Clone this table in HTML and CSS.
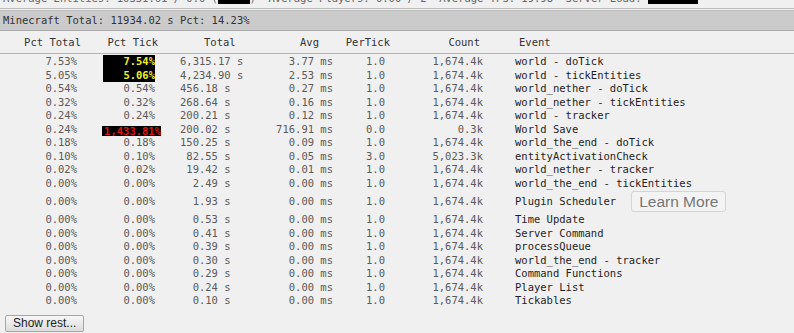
FILE: index.html
```html
<!DOCTYPE html>
<html>
<head>
<meta charset="utf-8">
<title>Timings</title>
<link rel="stylesheet" href="styles.css">
</head>
<body>
<div class="strip"><div class="strip-line">Average Entities: 10331.61 / 0.0 (<span class="blk">     </span>)  Average Players: 0.00 / 2  Average TPS: 19.98  Server Load: <span class="blk">        </span></div></div>
<div class="rule"></div>
<div class="summary">Minecraft Total: 11934.02 s Pct: 14.23%</div>
<table class="timings">
<colgroup>
<col class="w1"><col class="w2"><col class="w3"><col class="w4"><col class="w5"><col class="w6"><col class="w7">
</colgroup>
<thead>
<tr>
<th class="h-pct">Pct Total</th>
<th class="h-tick">Pct Tick</th>
<th class="h-total">Total</th>
<th class="h-avg">Avg</th>
<th class="h-per">PerTick</th>
<th class="h-count">Count</th>
<th class="h-event">Event</th>
</tr>
</thead>
<tbody>
<tr class="first"><td class="c-pct">7.53%</td><td class="c-tick"><span class="hot">7.54%</span></td><td class="c-total">6,315.17 s</td><td class="c-avg">3.77 ms</td><td class="c-per">1.0</td><td class="c-count">1,674.4k</td><td class="c-event">world - doTick</td></tr>
<tr><td class="c-pct">5.05%</td><td class="c-tick"><span class="hot">5.06%</span></td><td class="c-total">4,234.90 s</td><td class="c-avg">2.53 ms</td><td class="c-per">1.0</td><td class="c-count">1,674.4k</td><td class="c-event">world - tickEntities</td></tr>
<tr><td class="c-pct">0.54%</td><td class="c-tick">0.54%</td><td class="c-total">456.18 s</td><td class="c-avg">0.27 ms</td><td class="c-per">1.0</td><td class="c-count">1,674.4k</td><td class="c-event">world_nether - doTick</td></tr>
<tr><td class="c-pct">0.32%</td><td class="c-tick">0.32%</td><td class="c-total">268.64 s</td><td class="c-avg">0.16 ms</td><td class="c-per">1.0</td><td class="c-count">1,674.4k</td><td class="c-event">world_nether - tickEntities</td></tr>
<tr><td class="c-pct">0.24%</td><td class="c-tick">0.24%</td><td class="c-total">200.21 s</td><td class="c-avg">0.12 ms</td><td class="c-per">1.0</td><td class="c-count">1,674.4k</td><td class="c-event">world - tracker</td></tr>
<tr><td class="c-pct">0.24%</td><td class="c-tick"><span class="lag">1,433.81%</span></td><td class="c-total">200.02 s</td><td class="c-avg">716.91 ms</td><td class="c-per">0.0</td><td class="c-count">0.3k</td><td class="c-event">World Save</td></tr>
<tr><td class="c-pct">0.18%</td><td class="c-tick">0.18%</td><td class="c-total">150.25 s</td><td class="c-avg">0.09 ms</td><td class="c-per">1.0</td><td class="c-count">1,674.4k</td><td class="c-event">world_the_end - doTick</td></tr>
<tr><td class="c-pct">0.10%</td><td class="c-tick">0.10%</td><td class="c-total"> 82.55 s</td><td class="c-avg">0.05 ms</td><td class="c-per">3.0</td><td class="c-count">5,023.3k</td><td class="c-event">entityActivationCheck</td></tr>
<tr><td class="c-pct">0.02%</td><td class="c-tick">0.02%</td><td class="c-total"> 19.42 s</td><td class="c-avg">0.01 ms</td><td class="c-per">1.0</td><td class="c-count">1,674.4k</td><td class="c-event">world_nether - tracker</td></tr>
<tr><td class="c-pct">0.00%</td><td class="c-tick">0.00%</td><td class="c-total">  2.49 s</td><td class="c-avg">0.00 ms</td><td class="c-per">1.0</td><td class="c-count">1,674.4k</td><td class="c-event">world_the_end - tickEntities</td></tr>
<tr class="tall"><td class="c-pct">0.00%</td><td class="c-tick">0.00%</td><td class="c-total">  1.93 s</td><td class="c-avg">0.00 ms</td><td class="c-per">1.0</td><td class="c-count">1,674.4k</td><td class="c-event">Plugin Scheduler<button class="learn" type="button">Learn More</button></td></tr>
<tr><td class="c-pct">0.00%</td><td class="c-tick">0.00%</td><td class="c-total">  0.53 s</td><td class="c-avg">0.00 ms</td><td class="c-per">1.0</td><td class="c-count">1,674.4k</td><td class="c-event">Time Update</td></tr>
<tr><td class="c-pct">0.00%</td><td class="c-tick">0.00%</td><td class="c-total">  0.41 s</td><td class="c-avg">0.00 ms</td><td class="c-per">1.0</td><td class="c-count">1,674.4k</td><td class="c-event">Server Command</td></tr>
<tr><td class="c-pct">0.00%</td><td class="c-tick">0.00%</td><td class="c-total">  0.39 s</td><td class="c-avg">0.00 ms</td><td class="c-per">1.0</td><td class="c-count">1,674.4k</td><td class="c-event">processQueue</td></tr>
<tr><td class="c-pct">0.00%</td><td class="c-tick">0.00%</td><td class="c-total">  0.30 s</td><td class="c-avg">0.00 ms</td><td class="c-per">1.0</td><td class="c-count">1,674.4k</td><td class="c-event">world_the_end - tracker</td></tr>
<tr><td class="c-pct">0.00%</td><td class="c-tick">0.00%</td><td class="c-total">  0.29 s</td><td class="c-avg">0.00 ms</td><td class="c-per">1.0</td><td class="c-count">1,674.4k</td><td class="c-event">Command Functions</td></tr>
<tr><td class="c-pct">0.00%</td><td class="c-tick">0.00%</td><td class="c-total">  0.24 s</td><td class="c-avg">0.00 ms</td><td class="c-per">1.0</td><td class="c-count">1,674.4k</td><td class="c-event">Player List</td></tr>
<tr><td class="c-pct">0.00%</td><td class="c-tick">0.00%</td><td class="c-total">  0.10 s</td><td class="c-avg">0.00 ms</td><td class="c-per">1.0</td><td class="c-count">1,674.4k</td><td class="c-event">Tickables</td></tr>
</tbody>
</table>
<div class="actions"><button class="show-rest" type="button">Show rest...</button></div>
</body>
</html>
```
FILE: styles.css
```css
html, body {
  margin: 0;
  padding: 0;
  background: #f0f0f0;
}
body {
  font-family: "DejaVu Sans Mono", "Liberation Mono", monospace;
  font-size: 10.5px;
  color: #5a5a5a;
  width: 794px;
  overflow: hidden;
}
.strip {
  height: 8px;
  overflow: hidden;
}
.strip-line {
  margin-top: -9px;
  padding-left: 3px;
  line-height: 14px;
  white-space: pre;
  color: #666;
}
.blk {
  background: #000;
}
.rule {
  height: 0;
  border-top: 1px solid #bcbcbc;
  margin-bottom: 1px;
}
.summary {
  border-top: 1px solid #bdbdbd;
  border-bottom: 1px solid #a9a9a9;
  background: #cbcbcb;
  height: 19px;
  line-height: 19px;
  padding-left: 3px;
  color: #333;
}
.timings {
  border-collapse: separate;
  border-spacing: 0;
  table-layout: fixed;
  width: 794px;
}
.w1 { width: 81px; }
.w2 { width: 77px; }
.w3 { width: 92px; }
.w4 { width: 83px; }
.w5 { width: 57px; }
.w6 { width: 93px; }
.w7 { width: 311px; }
.timings th {
  font-weight: normal;
  color: #333;
  line-height: 22px;
  padding: 0;
  border-bottom: 1px solid #b4b4b4;
  white-space: nowrap;
}
.h-pct { text-align: right; }
.h-tick { text-align: right; }
.h-total { text-align: left; padding-left: 46px !important; }
.h-avg { text-align: right; padding-right: 14px !important; }
.h-per { text-align: right; }
.h-count { text-align: right; padding-right: 3px !important; }
.h-event { text-align: left; padding-left: 36px !important; }
.timings td {
  padding: 0;
  line-height: 13.5px;
  height: 13.5px;
  white-space: pre;
  vertical-align: middle;
  overflow: visible;
}
.timings tr.first td {
  padding-top: 1px;
}
.c-pct { text-align: right; padding-right: 4px !important; }
.c-tick { text-align: right; padding-right: 3px !important; }
.c-total { text-align: left; padding-left: 22px !important; }
.c-avg { text-align: right; }
.c-per { text-align: right; padding-right: 5px !important; }
.c-count { text-align: right; }
.c-event { text-align: left; padding-left: 32px !important; color: #1e1e1e; }
.hot {
  display: inline-block;
  width: 52px;
  height: 13.5px;
  line-height: 13.5px;
  vertical-align: top;
  text-align: right;
  background: #000;
  color: #f0f031;
  font-weight: bold;
}
.lag {
  display: inline-block;
  height: 10px;
  line-height: 10px;
  vertical-align: -2px;
  padding-left: 2px;
  margin-right: -6px;
  background: #000;
  color: #e01414;
  font-weight: bold;
}
.timings tr.tall td {
  height: 23px;
}
.learn {
  display: inline-block;
  vertical-align: middle;
  margin: 0 0 0 15px;
  padding: 0 7px;
  height: 21px;
  line-height: 19px;
  border: 1px solid #d4d4d4;
  border-radius: 3px;
  background: #f3f3f3;
  color: #777;
  font-family: "Liberation Sans", Arial, sans-serif;
  font-size: 15.5px;
}
.actions {
  padding: 7px 0 0 5px;
}
.show-rest {
  margin: 0;
  padding: 0 7px;
  height: 17px;
  line-height: 15px;
  border: 1px solid #a6a6a6;
  border-radius: 2px;
  background: linear-gradient(#f7f7f7, #dcdcdc);
  color: #222;
  font-family: "Liberation Sans", Arial, sans-serif;
  font-size: 12px;
}
```
